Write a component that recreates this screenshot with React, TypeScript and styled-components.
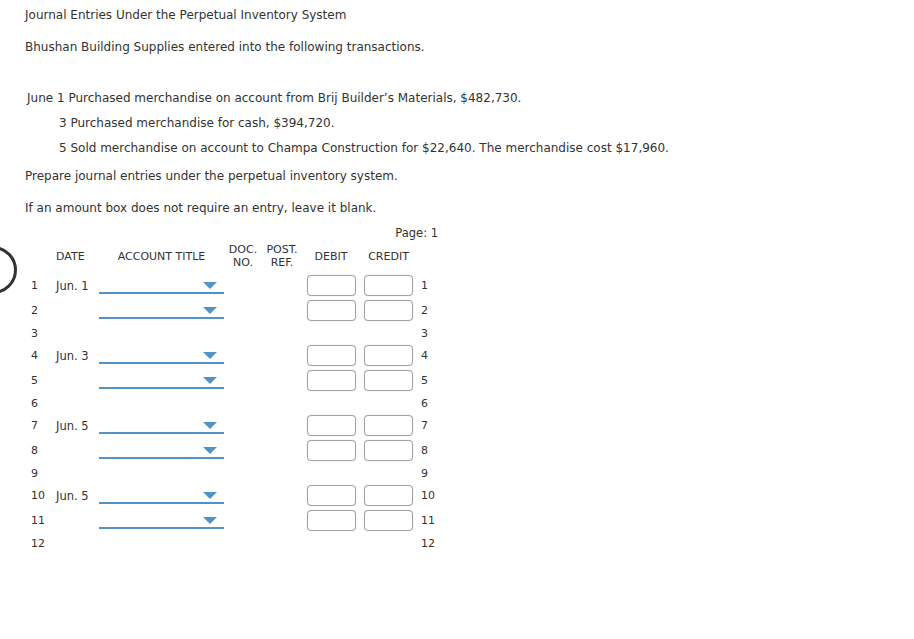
import React from "react";
import styled, { createGlobalStyle } from "styled-components";

const Global = createGlobalStyle`
  html, body { margin: 0; padding: 0; background: #fff; }
  body { font-family: "DejaVu Sans", Verdana, sans-serif; font-size: 11px; color: #333; }
`;

const Page = styled.div`
  position: relative;
  width: 914px;
  height: 639px;
  padding: 8px 0 0 25px;
  box-sizing: border-box;
  overflow: hidden;
`;

const Line = styled.p<{ $top: number; $indent?: number }>`
  margin: ${(p) => p.$top}px 0 0 ${(p) => p.$indent ?? 0}px;
  font-size: 12px;
  line-height: 15px;
  white-space: nowrap;
`;

const PageLabel = styled.div`
  width: 413px;
  text-align: right;
  margin-top: 10px;
  font-size: 11.5px;
  line-height: 15px;
`;

const Grid = styled.div`
  display: grid;
  grid-template-columns: 29px 43px 125px 38px 40px 58px 57px 30px;
  margin-left: 2px;
  width: 420px;
`;

const HeadCell = styled.div<{ $align?: string }>`
  height: 32px;
  display: flex;
  align-items: center;
  justify-content: ${(p) => p.$align ?? "center"};
  text-align: center;
  line-height: 13px;
  padding: 2px 0 4px;
  box-sizing: border-box;
`;

const Cell = styled.div<{ $h: number; $pad?: number }>`
  height: ${(p) => p.$h}px;
  display: flex;
  align-items: center;
  padding-left: ${(p) => p.$pad ?? 0}px;
  white-space: nowrap;
`;

const DateCell = styled(Cell)`
  font-size: 11.5px;
`;

const InputCell = styled(Cell)`
  justify-content: center;
`;

const DropWrap = styled.div<{ $h: number }>`
  position: relative;
  height: ${(p) => p.$h}px;
  border-bottom: 2px solid #5193c6;
  box-sizing: border-box;
  margin-bottom: 4px;
`;

const DropCell = styled.div<{ $h: number }>`
  height: ${(p) => p.$h}px;
`;

const Arrow = styled.span`
  position: absolute;
  right: 7px;
  top: 9px;
  width: 0;
  height: 0;
  border-left: 7px solid transparent;
  border-right: 7px solid transparent;
  border-top: 7px solid #5193c6;
`;

const Amount = styled.input`
  width: 49px;
  height: 21px;
  box-sizing: border-box;
  border: 1px solid #a3a3a3;
  border-radius: 4px;
  box-shadow: 0 0 1px #c8c8c8;
  padding: 0;
  margin: 0;
  background: #fff;
  outline: none;
`;

const Ring = styled.div`
  position: absolute;
  left: -31px;
  top: 246px;
  width: 42px;
  height: 42px;
  border: 3px solid #333;
  border-radius: 50%;
`;

type Row = { n: number; date?: string; entry: boolean };

const rows: Row[] = [
  { n: 1, date: "Jun. 1", entry: true },
  { n: 2, entry: true },
  { n: 3, entry: false },
  { n: 4, date: "Jun. 3", entry: true },
  { n: 5, entry: true },
  { n: 6, entry: false },
  { n: 7, date: "Jun. 5", entry: true },
  { n: 8, entry: true },
  { n: 9, entry: false },
  { n: 10, date: "Jun. 5", entry: true },
  { n: 11, entry: true },
  { n: 12, entry: false },
];

export default function App() {
  return (
    <>
      <Global />
      <Page>
        <Ring />
        <Line $top={0}>Journal Entries Under the Perpetual Inventory System</Line>
        <Line $top={17}>Bhushan Building Supplies entered into the following transactions.</Line>
        <Line $top={36} $indent={2}>June 1 Purchased merchandise on account from Brij Builder’s Materials, $482,730.</Line>
        <Line $top={10} $indent={34}>3 Purchased merchandise for cash, $394,720.</Line>
        <Line $top={10} $indent={34}>5 Sold merchandise on account to Champa Construction for $22,640. The merchandise cost $17,960.</Line>
        <Line $top={13}>Prepare journal entries under the perpetual inventory system.</Line>
        <Line $top={17}>If an amount box does not require an entry, leave it blank.</Line>
        <PageLabel>Page: 1</PageLabel>
        <Grid>
          <HeadCell />
          <HeadCell $align="flex-start">DATE</HeadCell>
          <HeadCell>ACCOUNT TITLE</HeadCell>
          <HeadCell>DOC.<br />NO.</HeadCell>
          <HeadCell>POST.<br />REF.</HeadCell>
          <HeadCell>DEBIT</HeadCell>
          <HeadCell>CREDIT</HeadCell>
          <HeadCell />
          {rows.map((r) => {
            const h = r.entry ? 25 : 20;
            return (
              <React.Fragment key={r.n}>
                <Cell $h={h} $pad={4}>{r.n}</Cell>
                <DateCell $h={h}>{r.date ?? ""}</DateCell>
                <DropCell $h={h}>
                  {r.entry && (
                    <DropWrap $h={h - 4}>
                      <Arrow />
                    </DropWrap>
                  )}
                </DropCell>
                <Cell $h={h} />
                <Cell $h={h} />
                <InputCell $h={h}>{r.entry && <Amount type="text" />}</InputCell>
                <InputCell $h={h}>{r.entry && <Amount type="text" />}</InputCell>
                <Cell $h={h} $pad={4}>{r.n}</Cell>
              </React.Fragment>
            );
          })}
        </Grid>
      </Page>
    </>
  );
}
